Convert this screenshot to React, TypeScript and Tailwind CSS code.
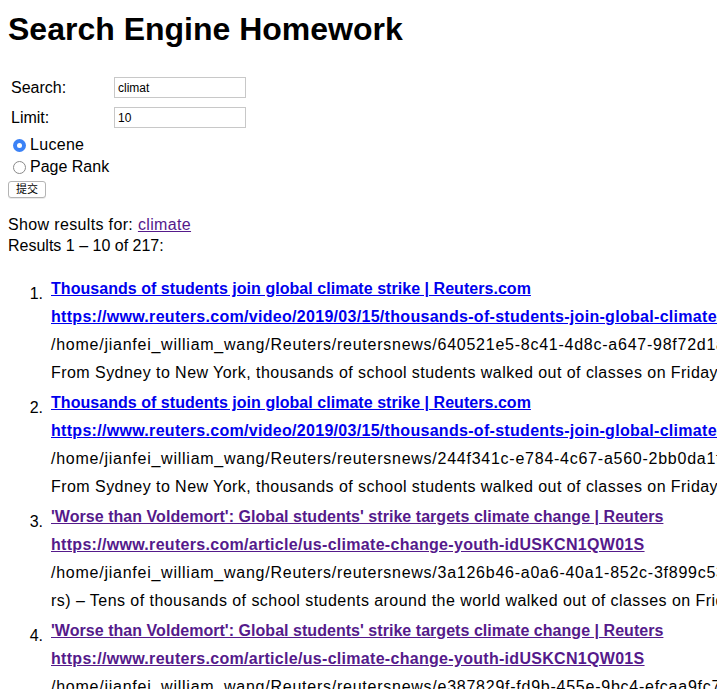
import React from "react";

const items = [
  {
    title: "Thousands of students join global climate strike | Reuters.com",
    url: "https://www.reuters.com/video/2019/03/15/thousands-of-students-join-global-climate-strike-idOVC4X1ZQDL",
    path: "/home/jianfei_william_wang/Reuters/reutersnews/640521e5-8c41-4d8c-a647-98f72d1a3c55.html",
    snippet: "From Sydney to New York, thousands of school students walked out of classes on Friday to protest",
    visited: false,
  },
  {
    title: "Thousands of students join global climate strike | Reuters.com",
    url: "https://www.reuters.com/video/2019/03/15/thousands-of-students-join-global-climate-strike-idOVC4X1ZQDL",
    path: "/home/jianfei_william_wang/Reuters/reutersnews/244f341c-e784-4c67-a560-2bb0da1f8e21.html",
    snippet: "From Sydney to New York, thousands of school students walked out of classes on Friday to protest",
    visited: false,
  },
  {
    title: "'Worse than Voldemort': Global students' strike targets climate change | Reuters",
    url: "https://www.reuters.com/article/us-climate-change-youth-idUSKCN1QW01S",
    path: "/home/jianfei_william_wang/Reuters/reutersnews/3a126b46-a0a6-40a1-852c-3f899c53d1a2.html",
    snippet: "rs) – Tens of thousands of school students around the world walked out of classes on Friday",
    visited: true,
  },
  {
    title: "'Worse than Voldemort': Global students' strike targets climate change | Reuters",
    url: "https://www.reuters.com/article/us-climate-change-youth-idUSKCN1QW01S",
    path: "/home/jianfei_william_wang/Reuters/reutersnews/e387829f-fd9b-455e-9bc4-efcaa9fc7b10.html",
    snippet: "rs) – Tens of thousands of school students around the world walked out of classes on Friday",
    visited: true,
  },
];

export default function App() {
  return (
    <div
      className="w-[717px] h-[689px] overflow-hidden bg-white text-black"
      style={{ fontFamily: '"Liberation Sans", Arial, "Noto Sans CJK SC", sans-serif' }}
    >
      <div className="px-[8px] pt-[11px]">
        <h1 className="text-[32px] font-bold leading-[37px] whitespace-nowrap">Search Engine Homework</h1>

        <div className="mt-[29px] flex flex-col gap-[9px] pl-[3px]">
          <div className="flex items-center h-[21px]">
            <span className="w-[103px] text-[16px]">Search:</span>
            <div className="w-[132px] h-[21px] border border-[#c8c8c8] flex items-center px-[3px] text-[12px]">
              climat
            </div>
          </div>
          <div className="flex items-center h-[21px]">
            <span className="w-[103px] text-[16px]">Limit:</span>
            <div className="w-[132px] h-[21px] border border-[#c8c8c8] flex items-center px-[3px] text-[12px]">
              10
            </div>
          </div>
        </div>

        <div className="mt-[6px] flex flex-col">
          <div className="flex items-center h-[22px] text-[16px] tracking-[0.3px]">
            <span className="ml-[5px] mr-[4px] w-[13px] h-[13px] rounded-full bg-[#3b82f6] flex items-center justify-center">
              <span className="w-[5px] h-[5px] rounded-full bg-white" />
            </span>
            Lucene
          </div>
          <div className="flex items-center h-[22px] text-[16px]">
            <span className="ml-[5px] mr-[4px] w-[13px] h-[13px] rounded-full border border-[#8a8a8a] bg-white" />
            Page Rank
          </div>
        </div>

        <div className="mt-[3px] w-[38px] h-[17px] border border-[#b4b4b4] rounded-[3px] bg-white flex items-center justify-center text-[11px] shadow-[0_1px_0_rgba(0,0,0,0.08)]">
          提交
        </div>

        <div className="mt-[16px] text-[16px] leading-[21px] tracking-[0.35px] whitespace-nowrap">
          Show results for:{" "}
          <span className="text-[#551a8b] underline">climate</span>
        </div>
        <div className="text-[16px] leading-[21px] whitespace-nowrap">Results 1 – 10 of 217:</div>

        <div className="mt-[19px] flex flex-col gap-[2px]">
          {items.map((it, i) => (
            <div key={i} className="flex">
              <span className="w-[35px] shrink-0 text-right text-[16px] pt-[5px] leading-[28px]">{i + 1}.</span>
              <div className="ml-[8px] flex flex-col text-[16px] leading-[28px] whitespace-nowrap">
                <span className={`font-bold underline tracking-[0.04px] ${it.visited ? "text-[#551a8b]" : "text-[#0000ee]"}`}>{it.title}</span>
                <span className={`font-bold underline tracking-[0.3px] ${it.visited ? "text-[#551a8b]" : "text-[#0000ee]"}`}>{it.url}</span>
                <span className="tracking-[0.75px]">{it.path}</span>
                <span className="tracking-[0.45px]">{it.snippet}</span>
              </div>
            </div>
          ))}
        </div>
      </div>
    </div>
  );
}
